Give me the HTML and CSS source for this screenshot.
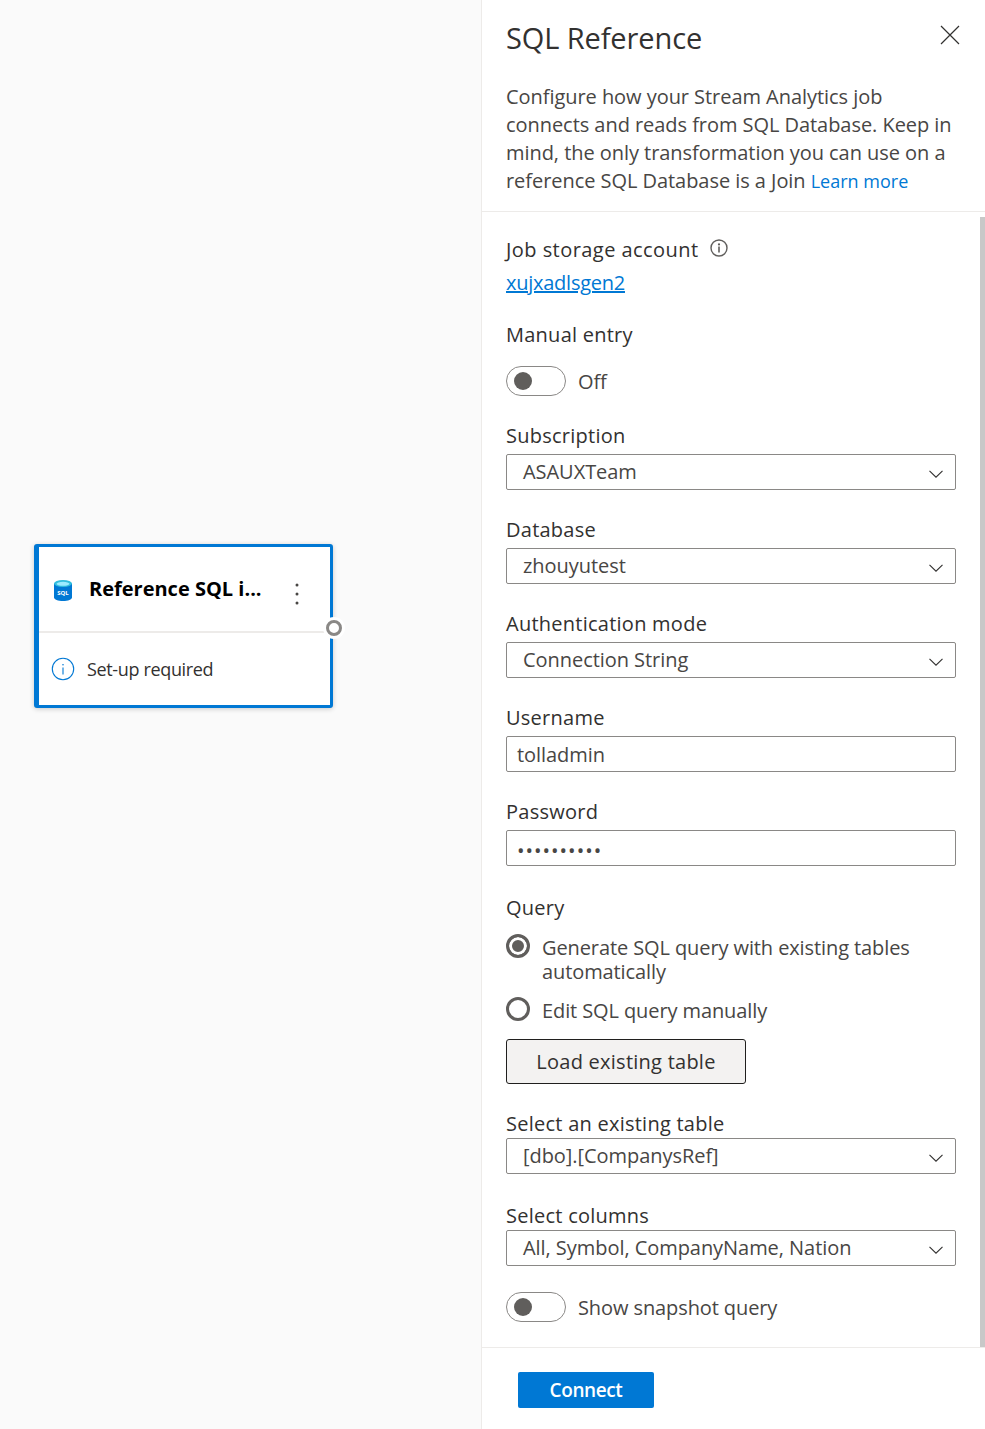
FILE: index.html

```html
<!DOCTYPE html>
<html lang="en-US">
<head>
	<title>SQL Reference</title>
	<meta charset="utf-8">
	<link rel="stylesheet" href="styles.css">
</head>
<body>
	<main class="canvas">
		<div class="node">
			<div class="node-head">
				<svg class="sql-icon" width="18" height="21" viewBox="0 0 18 21">
					<path d="M0 3.5v14C0 19.4 4 21 9 21s9-1.6 9-3.5v-14z" fill="#0078d4"/>
					<ellipse cx="9" cy="3.5" rx="9" ry="3.5" fill="#32bedd"/>
					<ellipse cx="9" cy="3.8" rx="6.5" ry="2" fill="#9cebff"/>
					<text x="9" y="14.5" class="sql-icon-text" text-anchor="middle">SQL</text>
				</svg>
				<span class="node-title">Reference SQL i...</span>
				<svg class="node-more" width="4" height="22" viewBox="0 0 4 22">
					<circle cx="2" cy="2" r="1.5"/><circle cx="2" cy="11" r="1.5"/><circle cx="2" cy="20" r="1.5"/>
				</svg>
			</div>
			<div class="node-body">
				<svg width="24" height="24" viewBox="0 0 24 24">
					<circle cx="12" cy="12" r="10.7" fill="none" stroke="#0078d4" stroke-width="1.1"/>
					<circle cx="12" cy="7.7" r=".8" fill="#0078d4"/>
					<path d="M12 10.5v7" stroke="#0078d4" stroke-width="1.1"/>
				</svg>
				<span>Set-up required</span>
			</div>
			<span class="node-port"></span>
		</div>
	</main>
	<aside class="panel">
		<header class="panel-head">
			<div class="title-row">
				<h1>SQL Reference</h1>
				<svg class="close" width="20" height="20" viewBox="0 0 20 20">
					<path d="M1 1l18 18M19 1L1 19" stroke="#323130" stroke-width="1.2" fill="none"/>
				</svg>
			</div>
			<p>Configure how your Stream Analytics job connects and reads from SQL Database. Keep in mind, the only transformation you can use on a reference SQL Database is a Join <a class="learn" href="#">Learn more</a></p>
		</header>
		<div class="panel-scroll">
			<form class="fields">
				<div class="label info-label">Job storage account
					<svg width="18" height="18" viewBox="0 0 18 18">
						<circle cx="9" cy="9" r="8" fill="none" stroke="#605e5c" stroke-width="1.4"/>
						<circle cx="9" cy="5.4" r="1.1" fill="#605e5c"/>
						<path d="M9 7.6v6" stroke="#605e5c" stroke-width="1.6"/>
					</svg>
				</div>
				<a class="account" href="#">xujxadlsgen2</a>

				<div class="label manual">Manual entry</div>
				<div class="toggle-row"><span class="toggle"></span><span>Off</span></div>

				<div class="label">Subscription</div>
				<div class="select"><span>ASAUXTeam</span><svg class="chev" width="14" height="8" viewBox="0 0 14 8"><path d="M.5.8L7 7.2 13.5.8" fill="none" stroke="#323130" stroke-width="1.1"/></svg></div>

				<div class="label">Database</div>
				<div class="select"><span>zhouyutest</span><svg class="chev" width="14" height="8" viewBox="0 0 14 8"><path d="M.5.8L7 7.2 13.5.8" fill="none" stroke="#323130" stroke-width="1.1"/></svg></div>

				<div class="label">Authentication mode</div>
				<div class="select"><span>Connection String</span><svg class="chev" width="14" height="8" viewBox="0 0 14 8"><path d="M.5.8L7 7.2 13.5.8" fill="none" stroke="#323130" stroke-width="1.1"/></svg></div>

				<div class="label">Username</div>
				<div class="input">tolladmin</div>

				<div class="label">Password</div>
				<div class="input dots">••••••••••</div>

				<div class="label query">Query</div>
				<div class="radio first"><span class="radio-mark on"></span><span class="radio-text">Generate SQL query with existing tables automatically</span></div>
				<div class="radio second"><span class="radio-mark"></span><span class="radio-text">Edit SQL query manually</span></div>
				<div class="load">Load existing table</div>

				<div class="label tight">Select an existing table</div>
				<div class="select"><span>[dbo].[CompanysRef]</span><svg class="chev" width="14" height="8" viewBox="0 0 14 8"><path d="M.5.8L7 7.2 13.5.8" fill="none" stroke="#323130" stroke-width="1.1"/></svg></div>

				<div class="label tight columns">Select columns</div>
				<div class="select"><span>All, Symbol, CompanyName, Nation</span><svg class="chev" width="14" height="8" viewBox="0 0 14 8"><path d="M.5.8L7 7.2 13.5.8" fill="none" stroke="#323130" stroke-width="1.1"/></svg></div>

				<div class="toggle-row snapshot"><span class="toggle"></span><span>Show snapshot query</span></div>
			</form>
			<div class="scrollbar"></div>
		</div>
		<footer class="panel-foot">
			<div class="connect">Connect</div>
		</footer>
	</aside>
</body>
</html>
```

FILE: styles.css

```css
*{
	box-sizing:border-box;
}

html,body{
	margin:0;
	height:100%;
}

body{
	display:flex;
	height:1429px;
	overflow:hidden;
	background:#fff;
	font-family:"Open Sans","Noto Sans",sans-serif;
	font-size:20px;
	letter-spacing:-.1px;
	color:#323130;
}

/* canvas side */
.canvas{
	width:481px;
	flex:none;
	background:#fafafa;
	padding:544px 0 0 34px;
}

.node{
	position:relative;
	width:299px;
	height:164px;
	background:#fff;
	border:solid 3px #0078d4;
	border-left-width:5px;
	border-radius:3px;
	box-shadow:0 1px 5px rgba(0,0,0,.2);
}

.node-head{
	display:flex;
	align-items:center;
	height:86px;
	padding:0 0 0 15px;
	border-bottom:solid 2px #edebe9;
}

.sql-icon{
	flex:none;
	margin-top:2px;
}

.sql-icon-text{
	font-size:6px;
	font-weight:700;
	letter-spacing:0;
	fill:#fff;
}

.node-title{
	margin:-2px 0 0 17px;
	font-weight:700;
	font-size:20px;
	letter-spacing:0;
	color:#000;
	white-space:nowrap;
}

.node-more{
	margin-left:33px;
	margin-top:10px;
	fill:#484644;
}

.node-body{
	display:flex;
	align-items:center;
	gap:12px;
	padding:24px 0 0 12px;
	font-size:18px;
	line-height:24px;
	letter-spacing:-.35px;
}

.node-port{
	position:absolute;
	right:-12px;
	top:73px;
	width:16px;
	height:16px;
	border:solid 3px #8a8886;
	border-radius:50%;
	background:#fff;
	box-shadow:0 0 0 3px #fff;
}

/* side panel */
.panel{
	flex:1;
	display:flex;
	flex-direction:column;
	border-left:solid 1px #edebe9;
	background:#fff;
}

.panel-head{
	height:212px;
	padding:0 24px;
	flex:none;
	border-bottom:solid 1px #edebe9;
}

.title-row{
	display:flex;
	justify-content:space-between;
	height:83px;
}

h1{
	margin:16px 0 0;
	font-size:29px;
	line-height:44px;
	font-weight:500;
	letter-spacing:-.1px;
}

.close{
	margin:25px 1px 0 0;
}

.panel-head p{
	margin:0;
	max-width:450px;
	line-height:28px;
	letter-spacing:-.05px;
	color:#484644;
}

a{
	color:#0078d4;
}

.learn{
	font-size:18px;
	letter-spacing:0;
	text-decoration:none;
}

.panel-scroll{
	flex:1;
	display:flex;
	min-height:0;
}

.fields{
	flex:1;
	display:flex;
	flex-direction:column;
	align-items:flex-start;
	padding:27px 23px 0 24px;
}

.label{
	height:22px;
	line-height:22px;
	font-weight:500;
	letter-spacing:.25px;
	margin-top:29px;
	margin-bottom:7px;
	white-space:nowrap;
}

.info-label{
	display:flex;
	align-items:center;
	margin:0 0 11px;
	letter-spacing:.45px;
}

.info-label svg{
	margin:-4px 0 0 11px;
}

.account{
	line-height:22px;
	height:22px;
	letter-spacing:-.25px;
}

.manual{
	margin:30px 0 20px;
}

.query{
	margin-top:31px;
}

.toggle-row{
	display:flex;
	align-items:center;
	gap:12px;
	height:30px;
	color:#484644;
}

.toggle{
	position:relative;
	display:block;
	width:60px;
	height:30px;
	border:solid 1px #8a8886;
	border-radius:15px;
}

.toggle::after{
	content:'';
	display:block;
	width:18px;
	height:18px;
	margin:5px 0 0 7px;
	border-radius:50%;
	background:#605e5c;
}

.select,.input{
	display:flex;
	align-items:center;
	justify-content:space-between;
	width:450px;
	height:36px;
	border:solid 1px #8a8886;
	border-radius:2px;
	color:#484644;
	letter-spacing:-.05px;
	white-space:nowrap;
}

.select{
	padding:0 12px 2px 16px;
}

.chev{
	margin-top:5px;
}

.input{
	padding:0 10px;
}

.dots{
	letter-spacing:1px;
	line-height:30px;
	padding-top:6px;
}

.radio{
	display:flex;
	gap:12px;
	line-height:24px;
	color:#484644;
}

.radio-text{
	padding-top:2px;
}

.first{
	margin-top:8px;
}

.second{
	margin-top:13px;
}

.radio-mark{
	flex:none;
	width:24px;
	height:24px;
	border:solid 3px #605e5c;
	border-radius:50%;
	background:#fff;
}

.radio-mark.on{
	background:#605e5c;
	box-shadow:inset 0 0 0 3px #fff;
}

.load{
	display:flex;
	align-items:center;
	justify-content:center;
	width:240px;
	height:45px;
	margin-top:16px;
	border:solid 1px #201f1e;
	border-radius:3px;
	background:#f3f2f1;
	font-weight:500;
	letter-spacing:.25px;
}

.tight{
	margin-bottom:3px;
}

.columns{
	margin-top:31px;
}

.snapshot{
	margin-top:26px;
}

.scrollbar{
	flex:none;
	width:5px;
	margin-top:5px;
	background:#c8c8c8;
}

.panel-foot{
	flex:none;
	height:82px;
	padding:24px 0 0 36px;
	border-top:solid 1px #edebe9;
}

.connect{
	display:flex;
	align-items:center;
	justify-content:center;
	width:136px;
	height:36px;
	border-radius:2px;
	background:#0078d4;
	color:#fff;
	font-weight:600;
	font-size:19px;
	letter-spacing:-.4px;
}
```
